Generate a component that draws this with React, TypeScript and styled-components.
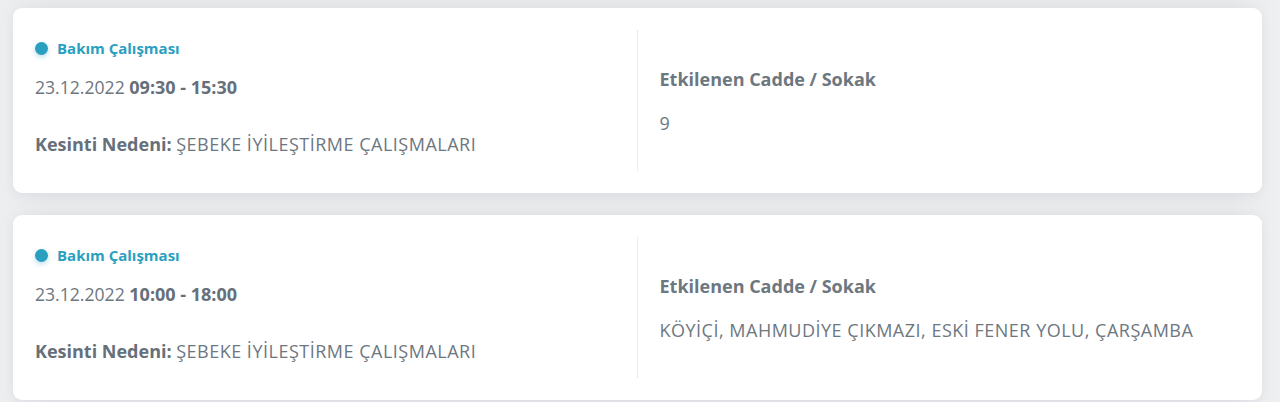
import React from "react";
import styled, { createGlobalStyle } from "styled-components";

const GlobalStyle = createGlobalStyle`
  html, body {
    margin: 0;
    padding: 0;
    background: #e8eaec;
    font-family: "Open Sans", "Noto Sans", sans-serif;
  }
`;

const Page = styled.div`
  display: flex;
  flex-direction: column;
  gap: 22px;
  padding: 8px 18px 0 13px;
  background: linear-gradient(90deg, #eceef0 0%, #e6e8ea 4%, #e6e8ea 96%, #eef0f2 100%);
  min-height: 402px;
  box-sizing: border-box;
`;

const Card = styled.div`
  display: grid;
  grid-template-columns: 1fr 1fr;
  height: 185px;
  box-sizing: border-box;
  padding: 22px;
  background: #ffffff;
  border-radius: 9px;
  box-shadow: 0 2px 12px rgba(40, 50, 60, 0.06);
`;

const LeftCol = styled.div`
  display: flex;
  flex-direction: column;
  padding-top: 8px;
  border-right: 1px solid #e9ebed;
`;

const RightCol = styled.div`
  display: flex;
  flex-direction: column;
  justify-content: center;
  padding-left: 22px;
  gap: 20px;
`;

const Status = styled.div`
  display: flex;
  align-items: center;
  gap: 9px;
  height: 20px;
  font-size: 15px;
  font-weight: 700;
  color: #2a9fc0;
`;

const Dot = styled.span`
  width: 13px;
  height: 13px;
  border-radius: 50%;
  background: #2a9fc0;
  box-shadow: 0 2px 5px rgba(42, 159, 192, 0.35);
`;

const Line = styled.div<{ $gap: number }>`
  margin-top: ${(p) => p.$gap}px;
  line-height: 24px;
  font-size: 17.6px;
  color: #6d7780;
  white-space: nowrap;

  b {
    font-size: 18px;
    font-weight: 700;
    color: #66707a;
  }
`;

const Caps = styled.span`
  font-size: 18px;
  letter-spacing: 0.5px;
`;

const Title = styled.div`
  line-height: 24px;
  font-size: 18px;
  font-weight: 700;
  color: #6d7780;
`;

const Value = styled.div`
  line-height: 24px;
  font-size: 18px;
  letter-spacing: 0.5px;
  color: #6d7780;
`;

interface Outage {
  date: string;
  time: string;
  reason: string;
  streets: string;
}

const outages: Outage[] = [
  {
    date: "23.12.2022",
    time: "09:30 - 15:30",
    reason: "ŞEBEKE İYİLEŞTİRME ÇALIŞMALARI",
    streets: "9",
  },
  {
    date: "23.12.2022",
    time: "10:00 - 18:00",
    reason: "ŞEBEKE İYİLEŞTİRME ÇALIŞMALARI",
    streets: "KÖYİÇİ, MAHMUDİYE ÇIKMAZI, ESKİ FENER YOLU, ÇARŞAMBA",
  },
];

const OutageCard = ({ item }: { item: Outage }) => (
  <Card>
    <LeftCol>
      <Status>
        <Dot />
        Bakım Çalışması
      </Status>
      <Line $gap={17}>
        {item.date} <b>{item.time}</b>
      </Line>
      <Line $gap={33}>
        <b>Kesinti Nedeni:</b> <Caps>{item.reason}</Caps>
      </Line>
    </LeftCol>
    <RightCol>
      <Title>Etkilenen Cadde / Sokak</Title>
      <Value>{item.streets}</Value>
    </RightCol>
  </Card>
);

const App = () => {
  return (
    <>
      <GlobalStyle />
      <Page>
        {outages.map((o, i) => (
          <OutageCard key={i} item={o} />
        ))}
      </Page>
    </>
  );
};

export default App;
